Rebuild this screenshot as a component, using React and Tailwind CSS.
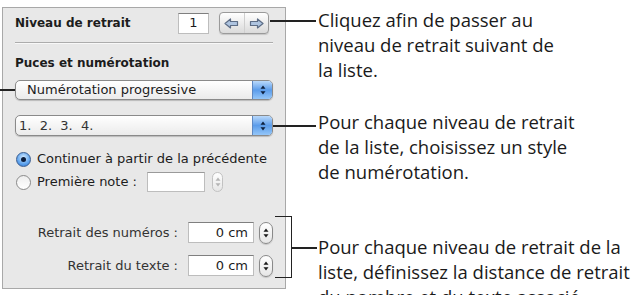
const ArrowL = () => (
  <svg width="15" height="11" viewBox="0 0 15 11">
    <polygon points="1,5.5 6.5,1 6.5,3.5 13.5,3.5 13.5,7.5 6.5,7.5 6.5,10" fill="#aec4e0" stroke="#5d6d86" strokeWidth="1.2" strokeLinejoin="round" />
  </svg>
);
const ArrowR = () => (
  <svg width="15" height="11" viewBox="0 0 15 11">
    <polygon points="14,5.5 8.5,1 8.5,3.5 1.5,3.5 1.5,7.5 8.5,7.5 8.5,10" fill="#aec4e0" stroke="#5d6d86" strokeWidth="1.2" strokeLinejoin="round" />
  </svg>
);
const UpDown = ({ color = "#0d1f3c" }) => (
  <svg width="8" height="12" viewBox="0 0 8 12">
    <polygon points="4,1.5 6.5,4.8 1.5,4.8" fill={color} />
    <polygon points="4,10.5 6.5,7.2 1.5,7.2" fill={color} />
  </svg>
);

const Stepper = ({ w = "w-[14px]", h = "h-[22px]", dim = false }) => (
  <div
    className={
      "flex flex-col items-center justify-center rounded-full border bg-linear-to-b from-white to-[#e6e6e6] " +
      w + " " + h + " " + (dim ? "border-[#c2c2c2]" : "border-[#8a8a8a] shadow-[0_1px_1px_rgba(0,0,0,0.15)]")
    }
  >
    <UpDown color={dim ? "#b4b4b4" : "#1a1a1a"} />
  </div>
);

const Field = ({ className, children }) => (
  <div className={"flex items-center border border-[#bdbdbd] border-t-[#7f7f7f] bg-white text-[13px] " + className}>{children}</div>
);

const Popup = ({ children, className, textClass }) => (
  <div className={"flex items-stretch overflow-hidden rounded-[5px] border border-[#8a8a8a] bg-linear-to-b from-white to-[#ebebeb] shadow-[0_1px_1px_rgba(0,0,0,0.2)] " + className}>
    <span className={"flex flex-1 items-center text-[13px] " + textClass}>{children}</span>
    <span className="flex w-[20px] items-center justify-center border-l border-[#5e88c2] bg-linear-to-b from-[#b9d9fb] via-[#5b9cea] to-[#94c6f8]">
      <UpDown />
    </span>
  </div>
);

export default function App() {
  return (
    <div className="relative h-[295px] w-[634px] overflow-hidden bg-white">
      <div className="flex items-start">
        <div className="ml-[2px] mt-[7px] h-[282px] w-[284px] shrink-0 border border-[#a8a8a8] bg-[#e8e8e8] px-[12px] pt-[4px] font-['DejaVu_Sans',sans-serif] text-[#1c1c1c]">
          <div className="flex h-[22px] items-center">
            <span className="text-[12px] font-bold">Niveau de retrait</span>
            <Field className="ml-auto h-[21px] w-[31px] justify-center">1</Field>
            <div className="ml-[10px] mr-[4px] flex h-[22px] w-[50px] overflow-hidden rounded-[4px] border border-[#9a9a9a] bg-linear-to-b from-white to-[#dadada] shadow-[0_1px_1px_rgba(0,0,0,0.15)]">
              <div className="flex flex-1 items-center justify-center border-r border-[#cfcfcf]"><ArrowL /></div>
              <div className="flex flex-1 items-center justify-center"><ArrowR /></div>
            </div>
          </div>

          <div className="mt-[8px] border-t border-b border-t-[#acacac] border-b-[#f8f8f8]" />

          <div className="mt-[11px] text-[12px] font-bold leading-[16px]">Puces et numérotation</div>

          <Popup className="mt-[9px] h-[20px]" textClass="pl-[11px]">Numérotation progressive</Popup>
          <Popup className="mt-[15px] h-[21px]" textClass="pl-[3px] whitespace-pre text-[#333]">1.  2.  3.  4.</Popup>

          <div className="mt-[14px] flex h-[18px] items-center text-[13px]">
            <span className="ml-[1px] flex h-[15px] w-[15px] items-center justify-center rounded-full border border-[#3b5e91] bg-[radial-gradient(circle_at_50%_35%,#d8edff,#5ea3ee_60%,#2c70cc)]">
              <span className="h-[5px] w-[5px] rounded-full bg-[#0b1d3d]" />
            </span>
            <span className="ml-[6px]">Continuer à partir de la précédente</span>
          </div>

          <div className="mt-[4px] flex h-[20px] items-center text-[13px]">
            <span className="ml-[1px] h-[15px] w-[15px] rounded-full border border-[#8a8a8a] bg-linear-to-b from-[#eeeeee] to-white" />
            <span className="ml-[6px] w-[110px]">Première note :</span>
            <Field className="h-[20px] w-[58px] border-t-[#9a9a9a]" />
            <div className="ml-[7px]"><Stepper w="w-[11px]" h="h-[20px]" dim /></div>
          </div>

          <div className="mt-[30px] flex h-[21px] items-center justify-end text-[13px] text-[#333]">
            <span>Retrait des numéros :</span>
            <Field className="ml-[10px] h-[21px] w-[66px] justify-end pr-[5px] text-[#1c1c1c]">0 cm</Field>
            <div className="ml-[5px]"><Stepper /></div>
          </div>

          <div className="mt-[12px] flex h-[21px] items-center justify-end text-[13px] text-[#333]">
            <span>Retrait du texte :</span>
            <Field className="ml-[10px] h-[21px] w-[66px] justify-end pr-[5px] text-[#1c1c1c]">0 cm</Field>
            <div className="ml-[5px]"><Stepper /></div>
          </div>
        </div>

        <div className="ml-[32px] whitespace-nowrap font-['Open_Sans',sans-serif] text-[18.5px] leading-[25px] text-[#1a1a1a]">
          <p className="mt-[7px]">Cliquez afin de passer au<br />niveau de retrait suivant de<br />la liste.</p>
          <p className="mt-[27px]">Pour chaque niveau de retrait<br />de la liste, choisissez un style<br />de numérotation.</p>
          <p className="mt-[50px]">Pour chaque niveau de retrait de la<br />liste, définissez la distance de retrait<br />du nombre et du texte associé.</p>
        </div>
      </div>

      {/* leader lines */}
      <div className="absolute left-[270px] top-[20px] h-[1.5px] w-[46px] bg-[#222]" />
      <div className="absolute left-0 top-[89px] h-[1.5px] w-[15px] bg-[#222]" />
      <div className="absolute left-[273px] top-[125px] h-[1.5px] w-[43px] bg-[#222]" />
      <div className="absolute left-[275px] top-[216px] h-[62px] w-[17px] border-y-[1.5px] border-r-[1.5px] border-[#222]" />
      <div className="absolute left-[292px] top-[247px] h-[1.5px] w-[25px] bg-[#222]" />
    </div>
  );
}
